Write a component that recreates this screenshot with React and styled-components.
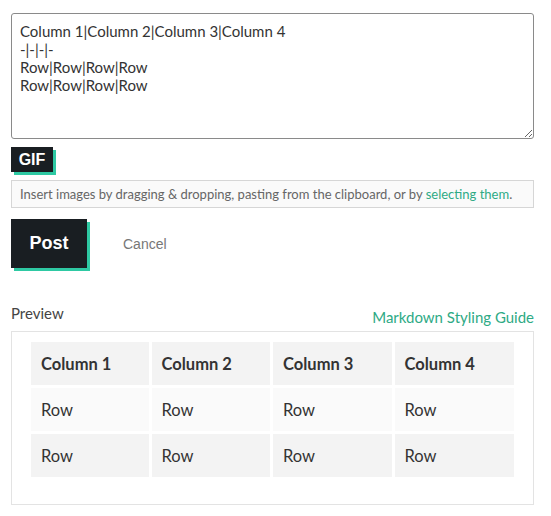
import React from "react";
import styled, { createGlobalStyle } from "styled-components";

const GlobalStyle = createGlobalStyle`
  body {
    margin: 0;
    background: #fff;
    font-family: "Lato", "Open Sans", sans-serif;
    color: #333;
  }
`;

const source = `Column 1|Column 2|Column 3|Column 4
-|-|-|-
Row|Row|Row|Row
Row|Row|Row|Row`;

const Page = styled.div`
  width: 523px;
  padding: 13px 0 0 11px;
  display: flex;
  flex-direction: column;
`;

const Editor = styled.textarea`
  box-sizing: border-box;
  width: 523px;
  height: 126px;
  padding: 8px 8px;
  border: 1px solid #8a8a8a;
  border-radius: 3px;
  font: 400 15px/18px "Lato", sans-serif;
  color: #333;
  resize: vertical;
  outline: none;
  margin: 0;
`;

const GifButton = styled.button`
  align-self: flex-start;
  margin-top: 8px;
  width: 42px;
  height: 25px;
  border: none;
  background: #191e22;
  color: #fff;
  font: 700 16px "Liberation Sans", Arial, sans-serif;
  box-shadow: 3px 3px 0 #2ec9a3;
  padding: 0;
  cursor: pointer;
`;

const InfoBar = styled.div`
  box-sizing: border-box;
  margin-top: 8px;
  height: 28px;
  padding: 0 8px;
  display: flex;
  align-items: center;
  border: 1px solid #d6d6d6;
  background: #fafafa;
  font: 400 13px "Lato", sans-serif;
  color: #666;
`;

const Link = styled.a`
  color: #2eaa85;
  text-decoration: none;
`;

const Actions = styled.div`
  margin-top: 11px;
  display: flex;
  align-items: center;
  gap: 36px;
`;

const PostButton = styled.button`
  width: 76px;
  height: 49px;
  border: none;
  padding: 0;
  background: #191e22;
  color: #fff;
  font: 700 18px "Liberation Sans", Arial, sans-serif;
  box-shadow: 3px 3px 0 #2ec9a3;
  cursor: pointer;
`;

const CancelButton = styled.button`
  border: none;
  background: none;
  padding: 0;
  color: #777;
  font: 400 14px "Liberation Sans", Arial, sans-serif;
  cursor: pointer;
`;

const PreviewHead = styled.div`
  margin-top: 36px;
  display: flex;
  justify-content: space-between;
  align-items: flex-end;
`;

const PreviewLabel = styled.span`
  font: 400 15px "Lato", sans-serif;
  color: #444;
  margin-bottom: 5px;
`;

const GuideLink = styled.a`
  font: 400 15px "Lato", sans-serif;
  color: #2eaa85;
  text-decoration: none;
  margin-bottom: 1px;
`;

const PreviewBox = styled.div`
  box-sizing: border-box;
  margin-top: 4px;
  height: 174px;
  border: 1px solid #e3e3e3;
  padding: 7px 16px 0 16px;
`;

const Table = styled.table`
  border-collapse: separate;
  border-spacing: 3px 3px;
  font-family: "Lato", sans-serif;
`;

const Cell = styled.td`
  box-sizing: border-box;
  width: ${(p) => p.$w}px;
  height: 43px;
  padding: 0 10px;
  background: ${(p) => (p.$shade ? "#f3f3f3" : "#fafafa")};
  font-size: 16.5px;
  font-weight: ${(p) => (p.$head ? 700 : 400)};
  color: #333;
  text-align: left;
`;

const widths = [118, 119, 119, 120];
const rows = [
  { cells: ["Column 1", "Column 2", "Column 3", "Column 4"], head: true, shade: true },
  { cells: ["Row", "Row", "Row", "Row"], shade: false },
  { cells: ["Row", "Row", "Row", "Row"], shade: true },
];

export default function App() {
  return (
    <>
      <GlobalStyle />
      <Page>
        <Editor defaultValue={source} />
        <GifButton>GIF</GifButton>
        <InfoBar>
          <span>
            Insert images by dragging &amp; dropping, pasting from the clipboard, or by{" "}
            <Link href="#">selecting them</Link>.
          </span>
        </InfoBar>
        <Actions>
          <PostButton>Post</PostButton>
          <CancelButton>Cancel</CancelButton>
        </Actions>
        <PreviewHead>
          <PreviewLabel>Preview</PreviewLabel>
          <GuideLink href="#">Markdown Styling Guide</GuideLink>
        </PreviewHead>
        <PreviewBox>
          <Table>
            <tbody>
              {rows.map((row, i) => (
                <tr key={i}>
                  {row.cells.map((c, j) => (
                    <Cell key={j} $w={widths[j]} $head={row.head} $shade={row.shade}>
                      {c}
                    </Cell>
                  ))}
                </tr>
              ))}
            </tbody>
          </Table>
        </PreviewBox>
      </Page>
    </>
  );
}
